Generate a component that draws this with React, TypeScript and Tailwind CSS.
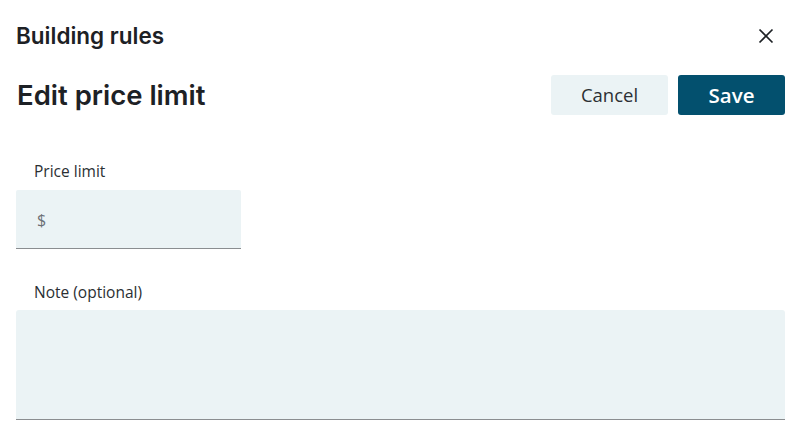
import React, { useState } from "react";

const labelCls =
  "block text-[15.5px] leading-5 text-[#2b2f33] font-['Open_Sans',sans-serif] pl-[18px]";

const App: React.FC = () => {
  const [price, setPrice] = useState("");
  const [note, setNote] = useState("");

  return (
    <div className="min-h-screen bg-white pl-4 pr-[14px] pt-[22px] text-[#1d2125]">
      <div className="flex items-center justify-between h-7">
        <h1 className="text-[22.5px] leading-7 font-semibold font-['Inter',sans-serif]">
          Building rules
        </h1>
        <button type="button" className="mr-[11px] w-[16px] h-[16px] flex items-center justify-center">
          <svg width="16" height="16" viewBox="0 0 16 16" fill="none">
            <path d="M1.5 1.5L14.5 14.5M14.5 1.5L1.5 14.5" stroke="#1d2125" strokeWidth="1.7" />
          </svg>
        </button>
      </div>

      <div className="flex items-center justify-between mt-[25px] h-10">
        <h2 className="text-[27.5px] leading-10 font-semibold font-['Inter',sans-serif] pl-px">
          Edit price limit
        </h2>
        <div className="flex gap-[10px]">
          <button
            type="button"
            className="w-[117px] h-10 rounded-[3px] bg-[#ebf3f5] text-[18.5px] text-[#2b2f33] font-['Open_Sans',sans-serif]"
          >
            Cancel
          </button>
          <button
            type="button"
            className="w-[107px] h-10 rounded-[3px] bg-[#03506e] text-[20.5px] font-semibold text-white font-['Open_Sans',sans-serif]"
          >
            Save
          </button>
        </div>
      </div>

      <div className="mt-[46px]">
        <label className={labelCls}>Price limit</label>
        <div className="mt-[9px] w-[225px] h-[59px] bg-[#ebf3f5] border-b border-[#8a8d90] rounded-t-[2px] flex items-center px-[21px] pt-px">
          <span className="text-[16px] text-[#6b7075] font-['Open_Sans',sans-serif]">$</span>
          <input
            value={price}
            onChange={(e) => setPrice(e.target.value)}
            className="ml-1 flex-1 min-w-0 bg-transparent outline-none text-[16px] font-['Open_Sans',sans-serif]"
          />
        </div>
      </div>

      <div className="mt-[33px]">
        <label className={labelCls}>Note (optional)</label>
        <textarea
          value={note}
          onChange={(e) => setNote(e.target.value)}
          className="block mt-2 w-full h-[110px] bg-[#ebf3f5] border-b border-[#8a8d90] rounded-t-[3px] resize-none outline-none px-5 py-3 text-[16px] font-['Open_Sans',sans-serif]"
        />
      </div>
    </div>
  );
};

export default App;
